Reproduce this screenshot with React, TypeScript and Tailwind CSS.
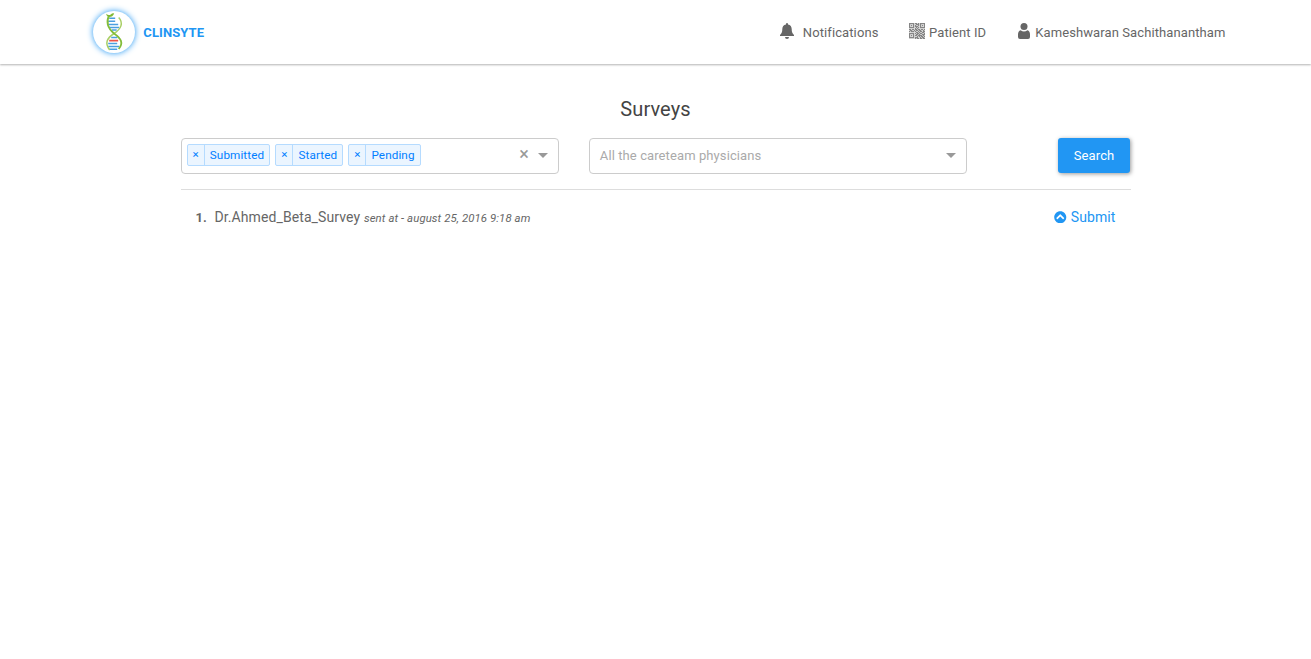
import React from "react";
import { FaChevronCircleUp } from "react-icons/fa";

function DnaLogo() {
  return (
    <svg width="42" height="42" viewBox="0.8 0 42 42" fill="none" className="shrink-0">
      <g stroke="#4a9fe0" strokeWidth="1.5">
        <path d="M17 7.200h6M16 10.300h7M16 13.400h10M17 16.500h10M19.500 19h5M19 26.500h6M16 32.600h9M16 35.500h11M17 38.200h8" />
      </g>
      <path d="M17 29.600h9" stroke="#ee5348" strokeWidth="1.800" />
      <path d="M26.500 6.500C31.500 12 29 18 21.800 22.500C15 27 12 32 17.500 39" stroke="#a9cf66" strokeWidth="1.500" />
      <path d="M17 4.500C13 12 16 17.500 21.800 22.500C29 27.500 31.500 32 26.500 38" stroke="#83bd3a" strokeWidth="1.800" />
      <path d="M14 2.800Q16.500 5 18.500 3.500Q20.500 1.500 22 2.500Q20.500 6 17 6Q14.500 6 14 2.800Z" fill="#7fb935" />
    </svg>
  );
}

function BellIcon() {
  return (
    <svg width="14" height="16" viewBox="0 0 14 16" fill="#666">
      <path d="M6 1a1 1 0 0 1 2 0v.5c2.500.5 3.700 2.200 3.700 4.600 0 3 .6 4.300 2.300 5.900V13H0v-1c1.700-1.600 2.300-2.900 2.300-5.900 0-2.400 1.200-4.100 3.700-4.600zM5 14h4a2 2 0 0 1-4 0z" />
    </svg>
  );
}

const QR_ROWS = [
  "1111101101011111",
  "1000100111010001",
  "1010101001010101",
  "1000101110010001",
  "1111100101011111",
  "0000001010000000",
  "1101101101101101",
  "0110010110110010",
  "1011101001011011",
  "0000000110100110",
  "1111101011011001",
  "1000100110100111",
  "1010101101111010",
  "1000100010101101",
  "1111101110010110",
  "0000001011011011",
];

function QrIcon() {
  return (
    <svg width="16" height="16" viewBox="0 0 16 16" fill="#858585">
      <rect width="16" height="16" opacity="0.25" />
      {QR_ROWS.flatMap((row, y) =>
        row.split("").map((cell, x) =>
          cell === "1" ? <rect key={`${x}-${y}`} x={x} y={y} width="1.150" height="1.150" /> : null
        )
      )}
    </svg>
  );
}

function UserIcon() {
  return (
    <svg width="12" height="16" viewBox="0 0 12 16" fill="#666">
      <circle cx="6" cy="3.500" r="3.500" />
      <path d="M2.600 7.200Q6 9.600 9.400 7.200Q12 8 12 11.500V14Q12 16 10 16H2Q0 16 0 14V11.500Q0 8 2.600 7.200Z" />
    </svg>
  );
}

function Arrow() {
  return (
    <svg width="10" height="5" viewBox="0 0 10 5" fill="#999" className="-mt-px">
      <path d="M0 0h10L5 5z" />
    </svg>
  );
}

function Tag({ label }: { label: string }) {
  return (
    <span className="flex h-[22px] rounded-[2px] border border-[#b5dbff] bg-[#ebf5ff] text-[11.7px] leading-[21px] tracking-[0.1px] text-[#007eff]">
      <span className="w-[17.3px] border-r border-[#b5dbff] text-center leading-[19px]">×</span>
      <span className="px-[5px]">{label}</span>
    </span>
  );
}

export default function App() {
  return (
    <div className="min-h-screen bg-white font-['Roboto',sans-serif] text-[13px] tracking-[0.1px] text-[#666]">
      <header className="flex h-[64px] items-center pr-[85.500px] pl-[92.500px] shadow-[0_1px_2px_rgba(0,0,0,0.3)]">
        <div className="-mt-px flex size-[42px] items-center justify-center overflow-hidden rounded-full shadow-[0_0_6px_#2196f3]">
          <DnaLogo />
        </div>
        <span className="ml-[8.800px] pt-px font-bold text-[#2196f3]">CLINSYTE</span>
        <nav className="ml-auto flex items-center">
          <span className="flex items-center">
            <span className="-mt-[3px]"><BellIcon /></span>
            <span className="ml-[9px] pt-px">Notifications</span>
          </span>
          <span className="ml-[30.800px] flex items-center">
            <span className="-mt-[3px]"><QrIcon /></span>
            <span className="ml-[3.700px] pt-px">Patient ID</span>
          </span>
          <span className="ml-8 flex items-center">
            <span className="-mt-[3px]"><UserIcon /></span>
            <span className="ml-[5px] pt-px">Kameshwaran Sachithanantham</span>
          </span>
        </nav>
      </header>
      <main className="mx-auto w-[950px] pt-[33px]">
        <h1 className="text-center text-[20px] leading-6 text-[#444]">Surveys</h1>
        <div className="mt-[17px] flex border-b border-[#ddd] pb-[15px]">
          <div className="flex h-9 w-[378px] items-center rounded border border-[#ccc] pr-[10px] pl-[5px]">
            <div className="-mt-0.5 flex gap-[5px]">
              <Tag label="Submitted" />
              <Tag label="Started" />
              <Tag label="Pending" />
            </div>
            <span className="-mt-1 mr-[8.500px] ml-auto text-[18px] leading-5 text-[#999]">×</span>
            <Arrow />
          </div>
          <div className="ml-[30px] flex h-9 w-[378px] items-center justify-between rounded border border-[#ccc] pr-[10px] pl-[10.300px] text-[#aaa]">
            <span>All the careteam physicians</span>
            <Arrow />
          </div>
          <button className="mr-[0.500px] ml-auto h-[35px] w-[72.500px] rounded-[3px] bg-[#2196f3] pl-[0.600px] text-white shadow-[1px_1px_4px_rgba(0,0,0,0.4)]">
            Search
          </button>
        </div>
        <div className="flex items-baseline px-[15px] pt-[17px] leading-5">
          <b className="tracking-[0.1px]">1.</b>
          <span className="ml-[7.500px] text-[14px]">Dr.Ahmed_Beta_Survey</span>
          <i className="ml-[3.700px] text-[11.375px]">sent at - august 25, 2016 9:18 am</i>
          <a className="ml-auto flex items-center gap-1 self-start text-[14px] text-[#2196f3]">
            <FaChevronCircleUp size={12.5} />
            Submit
          </a>
        </div>
      </main>
    </div>
  );
}
